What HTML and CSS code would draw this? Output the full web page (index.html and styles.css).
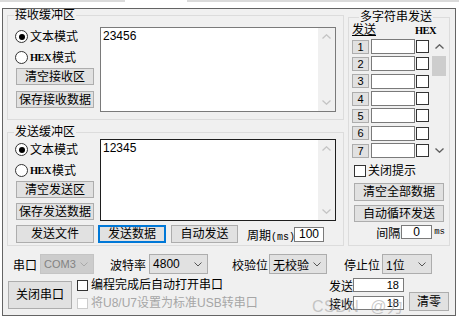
FILE: index.html
```html
<!DOCTYPE html>
<html lang="zh-CN">
<head>
<meta charset="UTF-8">
<title>串口助手</title>
<link rel="stylesheet" href="styles.css">
</head>
<body>

<div class="top-strip"><span class="bar bar-a"></span><span class="bar bar-b"></span></div>

<div class="window">

<div class="main">
<div class="left-col">

<fieldset class="group recv">
<legend>接收缓冲区</legend>
<div class="buf">
<div class="ctrls">
<div class="radio-row"><span class="radio on"></span>文本模式</div>
<div class="radio-row"><span class="radio"></span><span class="hex">HEX</span>模式</div>
<button class="btn">清空接收区</button>
<button class="btn">保存接收数据</button>
</div>
<div class="textbox recv-box">
<div class="text">23456</div>
<div class="vscroll">
<span class="arrow"><svg width="9" height="5" viewBox="0 0 9 5"><polyline points="0.5,4.5 4.5,0.8 8.5,4.5" fill="none" stroke="#c4c4c4" stroke-width="1.3"/></svg></span>
<span class="arrow"><svg width="9" height="5" viewBox="0 0 9 5"><polyline points="0.5,0.5 4.5,4.2 8.5,0.5" fill="none" stroke="#c4c4c4" stroke-width="1.3"/></svg></span>
</div>
</div>
</div>
</fieldset>

<fieldset class="group send">
<legend>发送缓冲区</legend>
<div class="buf">
<div class="ctrls">
<div class="radio-row"><span class="radio on"></span>文本模式</div>
<div class="radio-row"><span class="radio"></span><span class="hex">HEX</span>模式</div>
<button class="btn">清空发送区</button>
<button class="btn">保存发送数据</button>
</div>
<div class="textbox send-box">
<div class="text">12345</div>
<div class="vscroll">
<span class="arrow"><svg width="9" height="5" viewBox="0 0 9 5"><polyline points="0.5,4.5 4.5,0.8 8.5,4.5" fill="none" stroke="#c4c4c4" stroke-width="1.3"/></svg></span>
<span class="arrow"><svg width="9" height="5" viewBox="0 0 9 5"><polyline points="0.5,0.5 4.5,4.2 8.5,0.5" fill="none" stroke="#c4c4c4" stroke-width="1.3"/></svg></span>
</div>
</div>
</div>
<div class="send-bar">
<button class="btn btn-file">发送文件</button>
<button class="btn btn-focus">发送数据</button>
<button class="btn btn-auto">自动发送</button>
<span class="period">周期<span class="small">(ms)</span></span>
<span class="field period-val">100</span>
</div>
</fieldset>

</div>

<fieldset class="group multi">
<legend>多字符串发送</legend>
<div class="multi-head"><span class="ul">发送</span><span class="hex head-hex">HEX</span></div>
<div class="str-list">
<div class="rows">
<div class="row"><span class="num">1</span><span class="str"></span><span class="chk"></span></div>
<div class="row"><span class="num">2</span><span class="str"></span><span class="chk"></span></div>
<div class="row"><span class="num">3</span><span class="str"></span><span class="chk"></span></div>
<div class="row"><span class="num">4</span><span class="str"></span><span class="chk"></span></div>
<div class="row"><span class="num">5</span><span class="str"></span><span class="chk"></span></div>
<div class="row"><span class="num">6</span><span class="str"></span><span class="chk"></span></div>
<div class="row"><span class="num">7</span><span class="str"></span><span class="chk"></span></div>
</div>
<div class="list-scroll">
<span class="arrow"><svg width="9" height="5" viewBox="0 0 9 5"><polyline points="0.5,4.5 4.5,0.8 8.5,4.5" fill="none" stroke="#606060" stroke-width="1.4"/></svg></span>
<span class="thumb"></span>
<span class="track"></span>
<span class="arrow"><svg width="9" height="5" viewBox="0 0 9 5"><polyline points="0.5,0.5 4.5,4.2 8.5,0.5" fill="none" stroke="#606060" stroke-width="1.4"/></svg></span>
</div>
</div>
<div class="check-line tip"><span class="chk chk-12"></span>关闭提示</div>
<button class="btn btn-side">清空全部数据</button>
<button class="btn btn-side btn-loop">自动循环发送</button>
<div class="interval"><span>间隔</span><span class="field interval-val">0</span><span class="small ms">ms</span></div>
</fieldset>
</div>

<div class="serial-row">
<span class="lbl">串口</span>
<span class="combo off combo-com">COM3<svg width="8" height="5" viewBox="0 0 8 5"><polyline points="0.5,0.5 4,4 7.5,0.5" fill="none" stroke="#a8a8a8" stroke-width="1"/></svg></span>
<span class="lbl lbl-baud">波特率</span>
<span class="combo combo-baud">4800<svg width="8" height="5" viewBox="0 0 8 5"><polyline points="0.5,0.5 4,4 7.5,0.5" fill="none" stroke="#555" stroke-width="1"/></svg></span>
<span class="lbl lbl-parity">校验位</span>
<span class="combo combo-parity">无校验<svg width="8" height="5" viewBox="0 0 8 5"><polyline points="0.5,0.5 4,4 7.5,0.5" fill="none" stroke="#555" stroke-width="1"/></svg></span>
<span class="lbl lbl-stop">停止位</span>
<span class="combo combo-stop">1位<svg width="8" height="5" viewBox="0 0 8 5"><polyline points="0.5,0.5 4,4 7.5,0.5" fill="none" stroke="#555" stroke-width="1"/></svg></span>
</div>

<div class="ctrl-row">
<button class="btn btn-close">关闭串口</button>
<div class="opts">
<div class="check-line"><span class="chk chk-11"></span>编程完成后自动打开串口</div>
<div class="check-line disabled"><span class="chk chk-11"></span>将U8/U7设置为标准USB转串口</div>
</div>
<div class="counters">
<div class="counter"><span class="lbl">发送</span><span class="field count">18</span></div>
<div class="counter"><span class="lbl">接收</span><span class="field count">18</span></div>
</div>
<button class="btn btn-clear">清零</button>
</div>

</div>

<div class="watermark">CSDN @力</div>

</body>
</html>
```

FILE: styles.css
```css
/* ---------- GLOBAL ---------- */
*{margin:0;padding:0;box-sizing:border-box;}
body{
font-family:"Liberation Sans","Noto Sans CJK SC",sans-serif;
font-size:12px;
color:#000;
background:#fff;
width:459px;
height:320px;
overflow:hidden;
position:relative;
}
button{font:inherit;color:#000;cursor:default;}

/* ---------- FRAME ---------- */
.top-strip{height:8px;display:flex;}
.bar{height:2px;background:#dadada;}
.bar-a{width:125px;}
.bar-b{margin-left:62px;flex:1;}

.window{
margin-left:2px;
width:454px;
height:308px;
border:1px solid #646464;
background:#f0f0f0;
overflow:hidden;
}

.main{display:flex;padding-left:4px;}
.left-col{width:337px;}

/* ---------- GROUP BOXES ---------- */
.group{border:1px solid #dcdcdc;padding:0 7px 7px 7px;min-width:0;}
legend{font-size:12px;line-height:13px;padding:0 1px;margin-left:-1px;}

.recv{padding-top:4px;}
.send{margin-top:6px;padding-top:0;padding-bottom:2px;}

.buf{display:flex;align-items:flex-start;}
.ctrls{width:79px;display:flex;flex-direction:column;}
.radio-row{height:21px;display:flex;align-items:center;line-height:14px;}
.radio{
width:13px;height:13px;border:1px solid #333;border-radius:50%;
background:#fff;margin-right:2px;display:flex;align-items:center;justify-content:center;
}
.radio.on::after{content:"";width:6px;height:6px;border-radius:50%;background:#000;}
.hex{font-family:"Liberation Serif",serif;font-weight:700;font-size:10.5px;letter-spacing:-0.6px;margin-right:1px;}

.btn{
display:block;
height:17px;
background:#e1e1e1;
border:1px solid #adadad;
font-size:12px;
line-height:14px;
text-align:center;
}
.ctrls .btn{width:78px;margin-left:1px;}
.ctrls .btn + .btn{margin-top:5px;}
.recv .ctrls .btn + .btn{margin-top:6px;}

/* ---------- TEXT AREAS ---------- */
.textbox{display:flex;margin-left:6px;width:236px;background:#fff;border:1px solid #7a7a7a;}
.recv-box{height:85px;margin-top:1px;}
.send-box{height:82px;border-color:#1e1e1e;}
.textbox .text{flex:1;padding:1px 2px;font-size:12px;line-height:14px;}
.vscroll{width:17px;background:#f0f0f0;display:flex;flex-direction:column;justify-content:space-between;}
.arrow{height:17px;display:flex;align-items:center;justify-content:center;}

.send-bar{display:flex;align-items:center;margin-top:4px;height:18px;}
.send-bar .btn{height:18px;}
.btn-file{width:78px;margin-left:1px;}
.btn-focus{width:68px;margin-left:4px;border:2px solid #0078d7;line-height:13px;}
.btn-auto{width:67px;margin-left:5px;}
.period{margin-left:9px;width:47px;white-space:nowrap;}
.small{font-family:"Liberation Mono",monospace;font-size:10px;}
.field{background:#fff;border:1px solid #7a7a7a;line-height:12px;font-size:12px;}
.period-val{width:30px;height:15px;text-align:center;}

/* ---------- MULTI STRING ---------- */
.multi{width:102px;margin-left:4px;margin-top:2px;padding:0 2px 0 3px;}
.multi legend{margin-left:7px;}
.multi-head{height:14px;display:flex;line-height:13px;}
.ul{text-decoration:underline;}
.head-hex{margin-left:39px;}

.str-list{display:flex;height:121px;}
.rows{width:77px;display:grid;grid-template-rows:repeat(7,17.33px);}
.row{display:flex;align-items:center;}
.num{
width:17px;height:14px;background:#e1e1e1;border:1px solid #adadad;
font-size:11px;line-height:12px;text-align:center;
}
.str{width:44px;height:15px;margin-left:2px;background:#fff;border:1px solid #7a7a7a;}
.chk{width:13px;height:13px;margin-left:1px;border:1px solid #333;background:#fff;}
.list-scroll{width:16px;margin-left:2px;display:flex;flex-direction:column;}
.thumb{height:20px;margin:1px 1px 0;background:#cdcdcd;}
.track{flex:1;}

.check-line{display:flex;align-items:center;line-height:14px;white-space:nowrap;}
.tip{height:15px;margin-top:4px;margin-left:2px;}
.chk-12{width:12px;height:12px;margin:0 2px 0 0;}
.btn-side{width:90px;height:18px;margin:5px 0 0 2px;}
.btn-loop{height:17px;margin-top:4px;}
.interval{height:14px;margin-top:3px;display:flex;align-items:center;justify-content:flex-end;padding-right:2px;}
.interval-val{width:31px;height:14px;margin-left:1px;text-align:center;}
.ms{margin-left:2px;font-size:9px;}

/* ---------- SERIAL SETTINGS ---------- */
.serial-row{display:flex;align-items:center;height:20px;margin-top:8px;padding-left:10px;}
.lbl{white-space:nowrap;}
.combo{
height:20px;display:flex;align-items:center;justify-content:space-between;
padding:0 5px 0 3px;background:#e1e1e1;border:1px solid #adadad;
}
.combo.off{background:#cccccc;border-color:#c4c4c4;color:#838383;font-size:11px;}
.combo-com{width:54px;margin-left:3px;}
.lbl-baud{margin-left:16px;}
.combo-baud{width:59px;margin-left:3px;}
.lbl-parity{margin-left:24px;}
.combo-parity{width:58px;margin-left:1px;}
.lbl-stop{margin-left:17px;}
.combo-stop{width:50px;margin-left:2px;}

.ctrl-row{display:flex;margin-top:4px;height:33px;padding-right:6px;}
.btn-close{width:64px;height:28px;margin:3px 0 0 5px;}
.opts{margin-left:5px;}
.opts .check-line{height:14px;}
.opts .check-line + .check-line{margin-top:4px;}
.chk-11{width:11px;height:11px;margin:0 3px 0 0;}
.disabled{color:#a6a6a6;}
.disabled .chk{border-color:#cccccc;}

.counters{margin-left:auto;}
.counter{display:flex;align-items:center;height:14px;}
.counter + .counter{margin-top:4px;}
.count{width:51px;height:14px;text-align:right;padding-right:4px;font-size:11px;}
.btn-clear{width:40px;height:19px;margin-left:5px;align-self:flex-end;}

/* ---------- WATERMARK ---------- */
.watermark{
position:absolute;left:312px;top:293px;
font-size:16px;color:rgba(150,150,150,0.5);
word-spacing:6px;letter-spacing:0.5px;
white-space:nowrap;pointer-events:none;
}
```
